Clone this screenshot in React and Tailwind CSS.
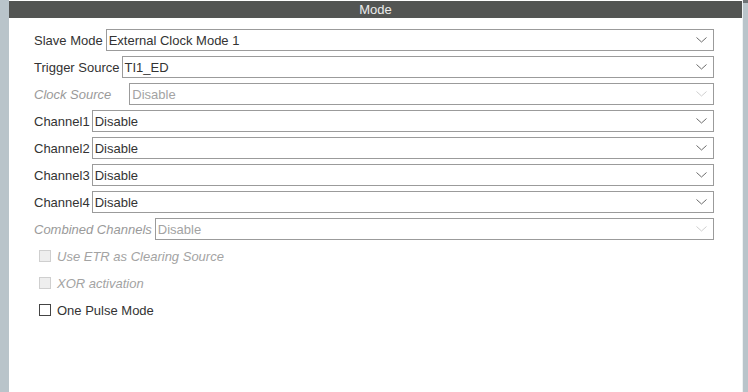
import React from 'react';

const ROWS = [
  { label: 'Slave Mode', value: 'External Clock Mode 1', gap: 'ml-[3px]' },
  { label: 'Trigger Source', value: 'TI1_ED', gap: 'ml-[2px]' },
  { label: 'Clock Source', value: 'Disable', gap: 'ml-[18px]', disabled: true },
  { label: 'Channel1', value: 'Disable', gap: 'ml-[2px]' },
  { label: 'Channel2', value: 'Disable', gap: 'ml-[2px]' },
  { label: 'Channel3', value: 'Disable', gap: 'ml-[2px]' },
  { label: 'Channel4', value: 'Disable', gap: 'ml-[2px]' },
  { label: 'Combined Channels', value: 'Disable', gap: 'ml-[3px]', disabled: true },
];

const CHECKS = [
  { label: 'Use ETR as Clearing Source', disabled: true },
  { label: 'XOR activation', disabled: true },
  { label: 'One Pulse Mode' },
];

function Chevron({ disabled }) {
  return (
    <svg width="11" height="6" viewBox="0 0 11 6" className="shrink-0">
      <path d="M0.5 0.5 L5.5 5 L10.5 0.5" fill="none" stroke={disabled ? '#cfcfcf' : '#6b6b6b'} strokeWidth="1" />
    </svg>
  );
}

function SelectRow({ label, value, gap, disabled }) {
  return (
    <div className="flex items-center h-[22px]">
      <span className={`whitespace-nowrap ${disabled ? 'italic text-[#9a9a9a]' : 'text-[#333]'}`}>{label}</span>
      <div className={`${gap} flex-1 h-[22px] flex items-center justify-between border border-[#9b9b9b] bg-white pl-[2px] pr-[6px]`}>
        <span className={disabled ? 'text-[#a3a3a3]' : 'text-[#333]'}>{value}</span>
        <Chevron disabled={disabled} />
      </div>
    </div>
  );
}

function CheckRow({ label, disabled }) {
  return (
    <div className="flex items-center h-[22px] pl-[5px]">
      <span
        className={`w-[12px] h-[12px] border ${disabled ? 'border-[#cfcfcf] bg-[#eeeeee]' : 'border-[#444] bg-white'}`}
      />
      <span className={`ml-[6px] ${disabled ? 'italic text-[#a3a3a3]' : 'text-[#333]'}`}>{label}</span>
    </div>
  );
}

export default function App() {
  return (
    <div className="flex w-[748px] h-[392px] bg-white text-[13px] leading-none" style={{ fontFamily: '"Liberation Sans", Arial, sans-serif' }}>
      <div className="w-[9px] bg-[#b9c4ca]" />
      <div className="flex-1 flex flex-col">
        <div className="mt-[1px] h-[17px] bg-[#535553] text-[#ececec] flex items-center justify-center">Mode</div>
        <div className="flex flex-col gap-[5px] pl-[25px] pr-[28px] pt-[11px]">
          {ROWS.map(r => (
            <SelectRow key={r.label} {...r} />
          ))}
          {CHECKS.map(c => (
            <CheckRow key={c.label} {...c} />
          ))}
        </div>
      </div>
      <div className="w-[1px] bg-[#eef1f2]" />
      <div className="w-[5px] bg-[#b9c4ca] flex flex-col">
        <div className="h-[3px] bg-[#6d7275]" />
      </div>
    </div>
  );
}
